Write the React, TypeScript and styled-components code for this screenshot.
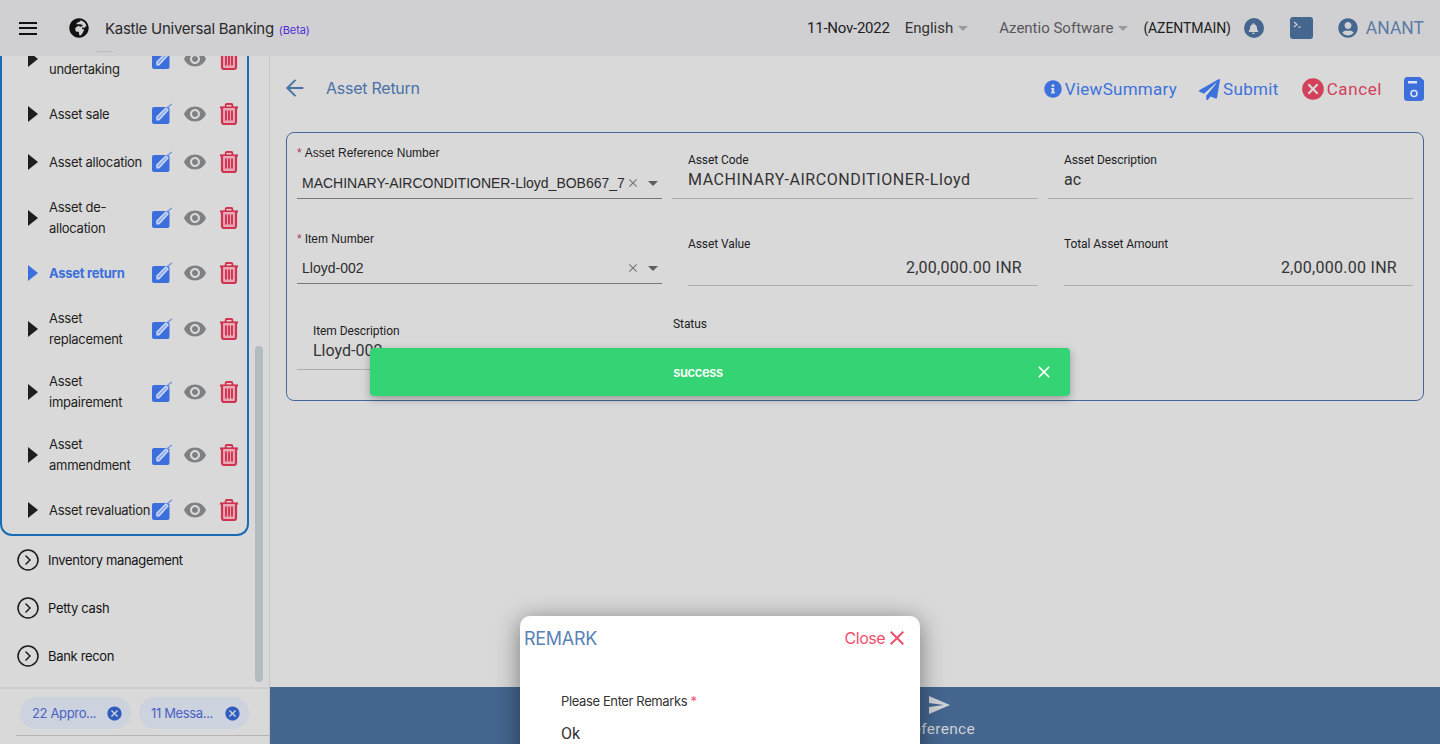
import React from "react";
import styled, { createGlobalStyle } from "styled-components";
import { FaGlobeAfrica, FaBell, FaUserCircle, FaInfoCircle, FaPaperPlane } from "react-icons/fa";
import { MdCancel, MdVisibility, MdClose, MdSend } from "react-icons/md";
import { ArrowLeft, CircleChevronRight } from "lucide-react";

const Global = createGlobalStyle`
  html, body { margin: 0; padding: 0; height: 100%; overflow: hidden; }
  body { font-family: Roboto, "Liberation Sans", sans-serif; background: #d9d9d9; color: #1c1c1e; }
  * { box-sizing: border-box; }
`;

const Page = styled.div`
  position: relative;
  width: 1440px;
  height: 744px;
  display: flex;
  flex-direction: column;
  overflow: hidden;
`;

const Header = styled.header`
  height: 56px;
  flex: none;
  background: #d0d0d2;
  display: flex;
  align-items: center;
  padding: 0 16px 0 19px;
  position: relative;
  z-index: 2;
  &::after {
    content: "";
    position: absolute;
    left: 97px;
    top: 51px;
    width: 16px;
    height: 1px;
    background: #bcbcbe;
  }
`;
const Burger = styled.div`
  width: 18px;
  height: 13px;
  border-top: 2px solid #111;
  border-bottom: 2px solid #111;
  position: relative;
  margin-right: 32px;
  &::after {
    content: "";
    position: absolute;
    left: 0;
    right: 0;
    top: 3.5px;
    height: 2px;
    background: #111;
  }
`;
const Title = styled.div`
  font-family: Inter, Roboto, sans-serif;
  font-size: 15px;
  color: #2a2a2c;
  margin-left: 16px;
  letter-spacing: -0.27px;
`;
const Beta = styled.span`
  font-size: 11px;
  color: #4b2fd6;
  margin-left: 5px;
  letter-spacing: -0.1px;
`;
const HeaderRight = styled.div`
  margin-left: auto;
  display: flex;
  align-items: center;
`;
const HeaderText = styled.span<{ $color?: string; $ml?: number; $size?: number; $ls?: number }>`
  font-size: ${(p) => p.$size ?? 15}px;
  color: ${(p) => p.$color ?? "#202022"};
  margin-left: ${(p) => p.$ml ?? 0}px;
  letter-spacing: ${(p) => p.$ls ?? 0}px;
  white-space: nowrap;
`;
const Caret = styled.span`
  width: 0;
  height: 0;
  margin-left: 5px;
  border-left: 5px solid transparent;
  border-right: 5px solid transparent;
  border-top: 5px solid #9a9a9e;
`;
const IconSlot = styled.span<{ $ml: number }>`
  display: inline-flex;
  margin-left: ${(p) => p.$ml}px;
`;
const BellBadge = styled.span`
  width: 20px;
  height: 20px;
  border-radius: 50%;
  background: #44668f;
  color: #d0d0d2;
  font-size: 11px;
  margin-left: 13px;
  display: inline-flex;
  align-items: center;
  justify-content: center;
`;

const Body = styled.div`
  flex: 1;
  display: flex;
  min-height: 0;
`;
const Sidebar = styled.aside`
  position: relative;
  width: 270px;
  flex: none;
  border-right: 1px solid #c6c6c6;
  display: flex;
  flex-direction: column;
`;
const SideScroll = styled.div`
  flex: 1;
  min-height: 0;
  overflow: hidden;
`;
const Group = styled.div`
  width: 249px;
  margin-top: -29px;
  border: 2px solid #1a6db5;
  border-top: none;
  border-radius: 0 0 12px 12px;
`;
const Row = styled.div<{ $h: number }>`
  height: ${(p) => p.$h}px;
  display: flex;
  align-items: center;
  padding-left: 26px;
`;
const Arrow = styled.span<{ $active?: boolean }>`
  width: 0;
  height: 0;
  flex: none;
  border-top: 8px solid transparent;
  border-bottom: 8px solid transparent;
  border-left: 10px solid ${(p) => (p.$active ? "#3a6fdc" : "#1e1e20")};
  margin-right: 11px;
`;
const RowLabel = styled.div<{ $active?: boolean }>`
  width: 103px;
  flex: none;
  font-family: Inter, Roboto, sans-serif;
  font-size: 13px;
  line-height: 21px;
  letter-spacing: -0.27px;
  white-space: nowrap;
  font-weight: ${(p) => (p.$active ? 700 : 400)};
  color: ${(p) => (p.$active ? "#3a6fdc" : "#1e1e20")};
`;
const RowIcons = styled.div`
  display: flex;
  align-items: center;
`;
const TopItem = styled.div`
  height: 48px;
  display: flex;
  align-items: center;
  padding-left: 16px;
  gap: 8px;
  font-family: Inter, Roboto, sans-serif;
  font-size: 13px;
  letter-spacing: -0.33px;
  color: #141416;
`;
const Track = styled.div`
  position: absolute;
  left: 255px;
  top: 290px;
  width: 8px;
  height: 336px;
  border-radius: 4px;
  background: #b2bcbe;
`;
const SideFooter = styled.div`
  height: 57px;
  flex: none;
  border-top: 2px solid #cdcdcd;
  padding: 8px 0 0 20px;
  position: relative;
  display: flex;
  gap: 8px;
  align-items: flex-start;
  &::after {
    content: "";
    position: absolute;
    left: 16px;
    right: 0;
    bottom: 8px;
    height: 1px;
    background: #b4b4b4;
  }
`;
const Chip = styled.div<{ $w: number }>`
  height: 32px;
  width: ${(p) => p.$w}px;
  border-radius: 16px;
  background: #ccd2de;
  color: #4a62c4;
  font-family: Inter, Roboto, sans-serif;
  font-size: 13px;
  letter-spacing: -0.35px;
  display: flex;
  align-items: center;
  justify-content: space-between;
  padding: 0 8px 0 12px;
  white-space: nowrap;
`;
const ChipClose = styled.span`
  display: inline-flex;
  color: #2f5cbd;
`;

const Main = styled.main`
  flex: 1;
  min-width: 0;
  display: flex;
  flex-direction: column;
  position: relative;
`;
const MainContent = styled.div`
  flex: 1;
  padding: 0 16px;
`;
const ActionBar = styled.div`
  height: 76px;
  display: flex;
  align-items: center;
  padding-bottom: 12px;
`;
const BackIcon = styled.span`
  display: inline-flex;
  color: #4a72a8;
  margin: 0 18px 0 -4px;
`;
const PageTitle = styled.div`
  font-family: Inter, Roboto, sans-serif;
  font-size: 16px;
  color: #4a72a8;
  letter-spacing: -0.25px;
`;
const Actions = styled.div`
  margin-left: auto;
  display: flex;
  align-items: center;
  padding-top: 2px;
`;
const Action = styled.div<{ $color: string; $ml?: number; $ls: number }>`
  display: flex;
  align-items: center;
  gap: 3px;
  color: ${(p) => p.$color};
  font-size: 17px;
  letter-spacing: ${(p) => p.$ls}px;
  margin-left: ${(p) => p.$ml ?? 0}px;
`;
const Panel = styled.section`
  border: 1px solid #44689c;
  border-radius: 8px;
  height: 269px;
  padding: 0 10px;
  display: grid;
  grid-template-columns: 365px 366px 365px;
  grid-template-rows: 66px 87px 85px;
  column-gap: 10px;
`;
const Field = styled.div<{ $pl?: number; $mb?: number }>`
  display: flex;
  flex-direction: column;
  justify-content: flex-end;
  padding-left: ${(p) => p.$pl ?? 0}px;
  margin-bottom: ${(p) => p.$mb ?? 0}px;
`;
const StatusField = styled.div`
  padding: 27px 0 0 1px;
`;
const Label = styled.label`
  font-size: 12px;
  line-height: 16px;
  color: #1d1d1f;
  letter-spacing: -0.08px;
`;
const RequiredLabel = styled(Label)`
  font-family: "Liberation Sans", Arial, sans-serif;
  letter-spacing: 0;
`;
const Req = styled.span`
  color: #a8384c;
  margin-right: 3px;
`;
const Value = styled.div<{ $pt: number; $pb: number; $pl?: number; $right?: boolean; $ls?: number }>`
  font-size: 16px;
  line-height: 20px;
  letter-spacing: ${(p) => p.$ls ?? 0}px;
  color: #333335;
  border-bottom: 1px solid #aeaeae;
  padding: ${(p) => p.$pt}px 0 ${(p) => p.$pb}px 0;
  margin-left: ${(p) => (p.$pl ? -p.$pl : 0)}px;
  padding-left: ${(p) => p.$pl ?? 0}px;
  padding-right: ${(p) => (p.$right ? 16 : 0)}px;
  text-align: ${(p) => (p.$right ? "right" : "left")};
`;
const SelectValue = styled.div<{ $pt: number }>`
  display: flex;
  align-items: center;
  font-family: "Liberation Sans", Arial, sans-serif;
  font-size: 14px;
  line-height: 20px;
  color: #2c2c2e;
  border-bottom: 1px solid #767676;
  padding: ${(p) => p.$pt}px 0 5px 5px;
`;
const SelectText = styled.span`
  flex: 1;
  min-width: 0;
  white-space: nowrap;
  overflow: hidden;
`;
const Clear = styled.span`
  color: #77777a;
  display: inline-flex;
  margin-right: 8px;
`;
const SelectCaret = styled.span`
  width: 0;
  height: 0;
  margin-right: 4px;
  border-left: 5px solid transparent;
  border-right: 5px solid transparent;
  border-top: 5px solid #5e5e60;
`;
const BottomBar = styled.div`
  height: 57px;
  flex: none;
  background: #44668f;
  display: flex;
  justify-content: center;
  padding-left: 168px;
  color: #cfd2d6;
`;
const BarButton = styled.div`
  display: flex;
  flex-direction: column;
  align-items: center;
  font-size: 15.5px;
  letter-spacing: 0.3px;
  padding-top: 6px;
  line-height: 18px;
  gap: 3px;
`;
const Toast = styled.div`
  position: absolute;
  left: 370px;
  top: 348px;
  width: 700px;
  height: 48px;
  background: #34d373;
  border-radius: 4px;
  box-shadow: 0 3px 8px rgba(0, 0, 0, 0.3);
  color: #fff;
  font-family: Inter, Roboto, sans-serif;
  font-size: 13px;
  font-weight: 600;
  letter-spacing: -0.4px;
  display: flex;
  align-items: center;
  justify-content: center;
  padding-right: 44px;
  z-index: 3;
`;
const ToastClose = styled.span`
  position: absolute;
  right: 16px;
  top: 14px;
  display: inline-flex;
`;
const Modal = styled.div`
  position: absolute;
  left: 520px;
  top: 616px;
  width: 400px;
  height: 200px;
  background: #fff;
  border-radius: 10px;
  box-shadow: 0 4px 24px rgba(0, 0, 0, 0.45);
  padding: 10px 11px 0 4px;
  z-index: 4;
`;
const ModalHead = styled.div`
  display: flex;
  align-items: center;
  justify-content: space-between;
  height: 24px;
`;
const ModalTitle = styled.div`
  font-family: Inter, Roboto, sans-serif;
  font-size: 18px;
  line-height: 24px;
  letter-spacing: -0.3px;
  color: #5a82b5;
  padding-top: 1px;
`;
const ModalClose = styled.div`
  display: flex;
  align-items: center;
  font-family: Inter, Roboto, sans-serif;
  font-size: 16px;
  letter-spacing: -0.5px;
  color: #f0506e;
`;
const ModalBody = styled.div`
  padding: 43px 0 0 37px;
`;
const RemarkLabel = styled.div`
  font-family: Inter, Roboto, sans-serif;
  font-size: 13px;
  line-height: 17px;
  letter-spacing: -0.38px;
  color: #333;
`;
const RemarkStar = styled.span`
  color: #f0506e;
`;
const RemarkValue = styled.div`
  font-size: 16px;
  line-height: 20px;
  margin-top: 14px;
  color: #333;
`;

const Edit = () => (
  <svg width="22" height="22" viewBox="0 0 22 22">
    <rect x="0" y="4" width="17.5" height="17" rx="2" fill="#3d6fdc" />
    <path d="M5 16.8 L4.9 14 L14 5 L16 7 L7 16.8 Z" fill="#8fa9e8" stroke="#d3def5" strokeWidth="1.3" />
    <path d="M14.5 5 L20 1" stroke="#6f93e0" strokeWidth="1.2" />
  </svg>
);
const Trash = () => (
  <svg width="20" height="22" viewBox="0 0 20 22" style={{ marginLeft: 12 }}>
    <path d="M1 4.5h18" stroke="#cf3350" strokeWidth="2.2" />
    <path d="M6.6 4V2.2c0-.7.4-1.2 1.1-1.2h4.6c.7 0 1.1.5 1.1 1.2V4" fill="none" stroke="#cf3350" strokeWidth="1.8" />
    <path d="M3 5v14c0 1.1.9 2 2 2h10c1.1 0 2-.9 2-2V5" fill="#e6a9b5" stroke="#cf3350" strokeWidth="2.2" />
    <path d="M7 7.5v10M10 7.5v10M13 7.5v10" stroke="#cf3350" strokeWidth="1.9" />
  </svg>
);
const Eye = () => (
  <IconSlot $ml={9} style={{ color: "#7f8084" }}>
    <MdVisibility size={24} />
  </IconSlot>
);
const Save = () => (
  <svg width="20" height="24" viewBox="0 0 20 24" style={{ marginLeft: 22 }}>
    <path d="M3.5 0h12.5l4 3.5V20.5a3.5 3.5 0 0 1-3.5 3.5H3.5A3.5 3.5 0 0 1 0 20.5V3.5A3.5 3.5 0 0 1 3.5 0Z" fill="#3d6fdc" />
    <rect x="4" y="4" width="9" height="2.5" fill="#d9e2f5" />
    <circle cx="10" cy="16.5" r="3" fill="none" stroke="#d9e2f5" strokeWidth="1.6" />
  </svg>
);
const Terminal = () => (
  <svg width="23" height="22" viewBox="0 0 23 22" style={{ marginLeft: 26 }}>
    <rect width="23" height="22" rx="3" fill="#44668f" />
    <path d="M4 5l3 2.5L4 10M8 10h3" fill="none" stroke="#d0d0d2" strokeWidth="1.2" />
  </svg>
);

const rows: { t: React.ReactNode; h: number; active?: boolean }[] = [
  { t: <>&nbsp;<br />undertaking</>, h: 63 },
  { t: "Asset sale", h: 48 },
  { t: "Asset allocation", h: 48 },
  { t: <>Asset de-<br />allocation</>, h: 63 },
  { t: "Asset return", h: 48, active: true },
  { t: <>Asset<br />replacement</>, h: 63 },
  { t: <>Asset<br />impairement</>, h: 63 },
  { t: <>Asset<br />ammendment</>, h: 63 },
  { t: "Asset revaluation", h: 48 },
];

const X = ({ s = 14 }: { s?: number }) => <MdClose size={s} />;

export default function App() {
  return (
    <Page>
      <Global />
      <Header>
        <Burger />
        <FaGlobeAfrica size={20} color="#111" />
        <Title>
          Kastle Universal Banking<Beta>(Beta)</Beta>
        </Title>
        <HeaderRight>
          <HeaderText $ls={-0.25}>11-Nov-2022</HeaderText>
          <HeaderText $ml={15} $color="#333">English</HeaderText>
          <Caret />
          <HeaderText $ml={31} $color="#57575a">Azentio Software</HeaderText>
          <Caret />
          <HeaderText $ml={15} $size={14} $ls={-0.1}>(AZENTMAIN)</HeaderText>
          <BellBadge><FaBell /></BellBadge>
          <Terminal />
          <IconSlot $ml={25}><FaUserCircle size={20} color="#44668f" /></IconSlot>
          <HeaderText $ml={8} $size={17.5} $color="#5b7ba6">ANANT</HeaderText>
        </HeaderRight>
      </Header>
      <Body>
        <Sidebar>
          <SideScroll>
            <Group>
              {rows.map((r, i) => (
                <Row key={i} $h={r.h}>
                  <Arrow $active={r.active} />
                  <RowLabel $active={r.active}>{r.t}</RowLabel>
                  <RowIcons>
                    <Edit />
                    <Eye />
                    <Trash />
                  </RowIcons>
                </Row>
              ))}
            </Group>
            {["Inventory management", "Petty cash", "Bank recon"].map((t) => (
              <TopItem key={t}>
                <CircleChevronRight size={24} strokeWidth={1.5} color="#1a1a1c" />
                {t}
              </TopItem>
            ))}
          </SideScroll>
          <Track />
          <SideFooter>
            <Chip $w={111}>22 Appro...<ChipClose><MdCancel size={17} /></ChipClose></Chip>
            <Chip $w={110}>11 Messa...<ChipClose><MdCancel size={17} /></ChipClose></Chip>
          </SideFooter>
        </Sidebar>
        <Main>
          <MainContent>
            <ActionBar>
              <BackIcon><ArrowLeft size={26} strokeWidth={1.8} /></BackIcon>
              <PageTitle>Asset Return</PageTitle>
              <Actions>
                <Action $color="#3d72dc" $ls={0.27}><FaInfoCircle size={18} />ViewSummary</Action>
                <Action $color="#3d72dc" $ml={22} $ls={0.33}><FaPaperPlane size={21} />Submit</Action>
                <Action $color="#d2405a" $ml={23} $ls={0.6}><MdCancel size={26} style={{ margin: "0 -2px" }} />Cancel</Action>
                <Save />
              </Actions>
            </ActionBar>
            <Panel>
              <Field>
                <RequiredLabel><Req>*</Req>Asset Reference Number</RequiredLabel>
                <SelectValue $pt={12}>
                  <SelectText>MACHINARY-AIRCONDITIONER-Lloyd_BOB667_7</SelectText>
                  <Clear><X /></Clear>
                  <SelectCaret />
                </SelectValue>
              </Field>
              <Field $pl={16}>
                <Label>Asset Code</Label>
                <Value $pt={2} $pb={8} $pl={16} $ls={0.57}>MACHINARY-AIRCONDITIONER-Lloyd</Value>
              </Field>
              <Field $pl={16}>
                <Label>Asset Description</Label>
                <Value $pt={2} $pb={8} $pl={16}>ac</Value>
              </Field>
              <Field $mb={2}>
                <RequiredLabel><Req>*</Req>Item Number</RequiredLabel>
                <SelectValue $pt={11}>
                  <SelectText>Lloyd-002</SelectText>
                  <Clear><X /></Clear>
                  <SelectCaret />
                </SelectValue>
              </Field>
              <Field $pl={16}>
                <Label>Asset Value</Label>
                <Value $pt={6} $pb={7} $right $ls={0.27}>2,00,000.00 INR</Value>
              </Field>
              <Field $pl={16}>
                <Label>Total Asset Amount</Label>
                <Value $pt={6} $pb={7} $right $ls={0.27}>2,00,000.00 INR</Value>
              </Field>
              <Field $pl={16} $mb={1}>
                <Label>Item Description</Label>
                <Value $pt={2} $pb={8} $pl={16}>Lloyd-002</Value>
              </Field>
              <StatusField>
                <Label>Status</Label>
              </StatusField>
            </Panel>
          </MainContent>
          <BottomBar>
            <BarButton>
              <MdSend size={24} />
              Reference
            </BarButton>
          </BottomBar>
        </Main>
      </Body>
      <Toast>
        success
        <ToastClose><X s={20} /></ToastClose>
      </Toast>
      <Modal>
        <ModalHead>
          <ModalTitle>REMARK</ModalTitle>
          <ModalClose>Close<MdClose size={24} /></ModalClose>
        </ModalHead>
        <ModalBody>
          <RemarkLabel>Please Enter Remarks <RemarkStar>*</RemarkStar></RemarkLabel>
          <RemarkValue>Ok</RemarkValue>
        </ModalBody>
      </Modal>
    </Page>
  );
}
